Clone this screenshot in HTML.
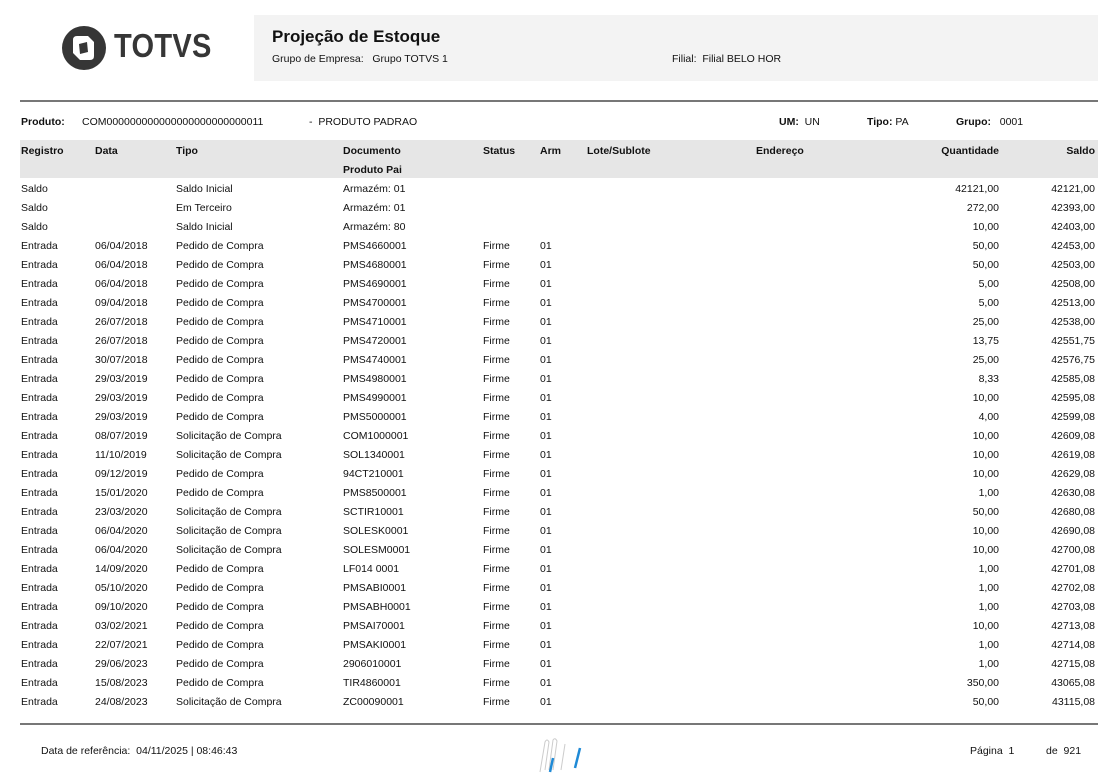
<!DOCTYPE html>
<html><head><meta charset="utf-8"><style>
body{margin:0;width:1108px;height:781px;background:#fff;font-family:"Liberation Sans",sans-serif;color:#111;position:relative;overflow:hidden;font-size:10.5px}
.a{position:absolute;white-space:nowrap}
.b{font-weight:bold}
.r{position:absolute;left:0;width:1108px;height:19px}
.r span{position:absolute;top:1px;white-space:nowrap}
.c1{left:21px}.c2{left:95px}.c3{left:176px}.c4{left:343px}.c5{left:483px}.c6{left:540px}
.q{right:109px}.s{right:13px}
</style></head><body>
<svg class="a" style="left:61px;top:25px" width="46" height="46" viewBox="0 0 46 46">
<circle cx="23" cy="23" r="22" fill="#363636"/>
<path d="M12 15 Q12 11 16 11 L27 11 L33 17 L33 31 Q33 35 29 35 L19 35 L12 28 Z" fill="#fff"/>
<path d="M18 19 L26 17 L27 27 L19 29 Z" fill="#363636"/>
</svg>
<div class="a b" style="left:114px;top:27px;font-size:33px;color:#363636;letter-spacing:0.3px;transform:scaleX(0.88);transform-origin:left">TOTVS</div>
<div class="a" style="left:254px;top:15px;width:844px;height:66px;background:#f3f3f3"></div>
<div class="a b" style="left:272px;top:27px;font-size:17px">Projeção de Estoque</div>
<div class="a" style="left:272px;top:53px">Grupo de Empresa:&nbsp;&nbsp; Grupo TOTVS 1</div>
<div class="a" style="left:672px;top:53px">Filial:&nbsp; Filial BELO HOR</div>
<div class="a" style="left:20px;top:100px;width:1078px;height:2px;background:#777"></div>
<div class="a b" style="left:21px;top:116px">Produto:</div>
<div class="a" style="left:82px;top:116px">COM000000000000000000000000011</div>
<div class="a" style="left:309px;top:116px">-&nbsp; PRODUTO PADRAO</div>
<div class="a" style="left:779px;top:116px"><b>UM:</b>&nbsp; UN</div>
<div class="a" style="left:867px;top:116px"><b>Tipo:</b> PA</div>
<div class="a" style="left:956px;top:116px"><b>Grupo:</b>&nbsp;&nbsp; 0001</div>
<div class="a" style="left:20px;top:140px;width:1078px;height:38px;background:#e6e6e6"></div>
<div class="r b" style="top:144px"><span class="c1">Registro</span><span class="c2">Data</span><span class="c3">Tipo</span><span class="c4">Documento</span><span class="c5">Status</span><span class="c6">Arm</span><span style="left:587px">Lote/Sublote</span><span style="left:756px">Endereço</span><span class="q">Quantidade</span><span class="s">Saldo</span></div>
<div class="r b" style="top:163px"><span class="c4">Produto Pai</span></div>
<div class="r" style="top:182px"><span class="c1">Saldo</span><span class="c3">Saldo Inicial</span><span class="c4">Armazém: 01</span><span class="q">42121,00</span><span class="s">42121,00</span></div>
<div class="r" style="top:201px"><span class="c1">Saldo</span><span class="c3">Em Terceiro</span><span class="c4">Armazém: 01</span><span class="q">272,00</span><span class="s">42393,00</span></div>
<div class="r" style="top:220px"><span class="c1">Saldo</span><span class="c3">Saldo Inicial</span><span class="c4">Armazém: 80</span><span class="q">10,00</span><span class="s">42403,00</span></div>
<div class="r" style="top:239px"><span class="c1">Entrada</span><span class="c2">06/04/2018</span><span class="c3">Pedido de Compra</span><span class="c4">PMS4660001</span><span class="c5">Firme</span><span class="c6">01</span><span class="q">50,00</span><span class="s">42453,00</span></div>
<div class="r" style="top:258px"><span class="c1">Entrada</span><span class="c2">06/04/2018</span><span class="c3">Pedido de Compra</span><span class="c4">PMS4680001</span><span class="c5">Firme</span><span class="c6">01</span><span class="q">50,00</span><span class="s">42503,00</span></div>
<div class="r" style="top:277px"><span class="c1">Entrada</span><span class="c2">06/04/2018</span><span class="c3">Pedido de Compra</span><span class="c4">PMS4690001</span><span class="c5">Firme</span><span class="c6">01</span><span class="q">5,00</span><span class="s">42508,00</span></div>
<div class="r" style="top:296px"><span class="c1">Entrada</span><span class="c2">09/04/2018</span><span class="c3">Pedido de Compra</span><span class="c4">PMS4700001</span><span class="c5">Firme</span><span class="c6">01</span><span class="q">5,00</span><span class="s">42513,00</span></div>
<div class="r" style="top:315px"><span class="c1">Entrada</span><span class="c2">26/07/2018</span><span class="c3">Pedido de Compra</span><span class="c4">PMS4710001</span><span class="c5">Firme</span><span class="c6">01</span><span class="q">25,00</span><span class="s">42538,00</span></div>
<div class="r" style="top:334px"><span class="c1">Entrada</span><span class="c2">26/07/2018</span><span class="c3">Pedido de Compra</span><span class="c4">PMS4720001</span><span class="c5">Firme</span><span class="c6">01</span><span class="q">13,75</span><span class="s">42551,75</span></div>
<div class="r" style="top:353px"><span class="c1">Entrada</span><span class="c2">30/07/2018</span><span class="c3">Pedido de Compra</span><span class="c4">PMS4740001</span><span class="c5">Firme</span><span class="c6">01</span><span class="q">25,00</span><span class="s">42576,75</span></div>
<div class="r" style="top:372px"><span class="c1">Entrada</span><span class="c2">29/03/2019</span><span class="c3">Pedido de Compra</span><span class="c4">PMS4980001</span><span class="c5">Firme</span><span class="c6">01</span><span class="q">8,33</span><span class="s">42585,08</span></div>
<div class="r" style="top:391px"><span class="c1">Entrada</span><span class="c2">29/03/2019</span><span class="c3">Pedido de Compra</span><span class="c4">PMS4990001</span><span class="c5">Firme</span><span class="c6">01</span><span class="q">10,00</span><span class="s">42595,08</span></div>
<div class="r" style="top:410px"><span class="c1">Entrada</span><span class="c2">29/03/2019</span><span class="c3">Pedido de Compra</span><span class="c4">PMS5000001</span><span class="c5">Firme</span><span class="c6">01</span><span class="q">4,00</span><span class="s">42599,08</span></div>
<div class="r" style="top:429px"><span class="c1">Entrada</span><span class="c2">08/07/2019</span><span class="c3">Solicitação de Compra</span><span class="c4">COM1000001</span><span class="c5">Firme</span><span class="c6">01</span><span class="q">10,00</span><span class="s">42609,08</span></div>
<div class="r" style="top:448px"><span class="c1">Entrada</span><span class="c2">11/10/2019</span><span class="c3">Solicitação de Compra</span><span class="c4">SOL1340001</span><span class="c5">Firme</span><span class="c6">01</span><span class="q">10,00</span><span class="s">42619,08</span></div>
<div class="r" style="top:467px"><span class="c1">Entrada</span><span class="c2">09/12/2019</span><span class="c3">Pedido de Compra</span><span class="c4">94CT210001</span><span class="c5">Firme</span><span class="c6">01</span><span class="q">10,00</span><span class="s">42629,08</span></div>
<div class="r" style="top:486px"><span class="c1">Entrada</span><span class="c2">15/01/2020</span><span class="c3">Pedido de Compra</span><span class="c4">PMS8500001</span><span class="c5">Firme</span><span class="c6">01</span><span class="q">1,00</span><span class="s">42630,08</span></div>
<div class="r" style="top:505px"><span class="c1">Entrada</span><span class="c2">23/03/2020</span><span class="c3">Solicitação de Compra</span><span class="c4">SCTIR10001</span><span class="c5">Firme</span><span class="c6">01</span><span class="q">50,00</span><span class="s">42680,08</span></div>
<div class="r" style="top:524px"><span class="c1">Entrada</span><span class="c2">06/04/2020</span><span class="c3">Solicitação de Compra</span><span class="c4">SOLESK0001</span><span class="c5">Firme</span><span class="c6">01</span><span class="q">10,00</span><span class="s">42690,08</span></div>
<div class="r" style="top:543px"><span class="c1">Entrada</span><span class="c2">06/04/2020</span><span class="c3">Solicitação de Compra</span><span class="c4">SOLESM0001</span><span class="c5">Firme</span><span class="c6">01</span><span class="q">10,00</span><span class="s">42700,08</span></div>
<div class="r" style="top:562px"><span class="c1">Entrada</span><span class="c2">14/09/2020</span><span class="c3">Pedido de Compra</span><span class="c4">LF014 0001</span><span class="c5">Firme</span><span class="c6">01</span><span class="q">1,00</span><span class="s">42701,08</span></div>
<div class="r" style="top:581px"><span class="c1">Entrada</span><span class="c2">05/10/2020</span><span class="c3">Pedido de Compra</span><span class="c4">PMSABI0001</span><span class="c5">Firme</span><span class="c6">01</span><span class="q">1,00</span><span class="s">42702,08</span></div>
<div class="r" style="top:600px"><span class="c1">Entrada</span><span class="c2">09/10/2020</span><span class="c3">Pedido de Compra</span><span class="c4">PMSABH0001</span><span class="c5">Firme</span><span class="c6">01</span><span class="q">1,00</span><span class="s">42703,08</span></div>
<div class="r" style="top:619px"><span class="c1">Entrada</span><span class="c2">03/02/2021</span><span class="c3">Pedido de Compra</span><span class="c4">PMSAI70001</span><span class="c5">Firme</span><span class="c6">01</span><span class="q">10,00</span><span class="s">42713,08</span></div>
<div class="r" style="top:638px"><span class="c1">Entrada</span><span class="c2">22/07/2021</span><span class="c3">Pedido de Compra</span><span class="c4">PMSAKI0001</span><span class="c5">Firme</span><span class="c6">01</span><span class="q">1,00</span><span class="s">42714,08</span></div>
<div class="r" style="top:657px"><span class="c1">Entrada</span><span class="c2">29/06/2023</span><span class="c3">Pedido de Compra</span><span class="c4">2906010001</span><span class="c5">Firme</span><span class="c6">01</span><span class="q">1,00</span><span class="s">42715,08</span></div>
<div class="r" style="top:676px"><span class="c1">Entrada</span><span class="c2">15/08/2023</span><span class="c3">Pedido de Compra</span><span class="c4">TIR4860001</span><span class="c5">Firme</span><span class="c6">01</span><span class="q">350,00</span><span class="s">43065,08</span></div>
<div class="r" style="top:695px"><span class="c1">Entrada</span><span class="c2">24/08/2023</span><span class="c3">Solicitação de Compra</span><span class="c4">ZC00090001</span><span class="c5">Firme</span><span class="c6">01</span><span class="q">50,00</span><span class="s">43115,08</span></div>
<div class="a" style="left:20px;top:723px;width:1078px;height:2px;background:#777"></div>
<div class="a" style="left:41px;top:745px">Data de referência:&nbsp; 04/11/2025 | 08:46:43</div>
<svg class="a" style="left:535px;top:736px" width="50" height="40" viewBox="0 0 50 40">
<g fill="none" stroke="#ccc" stroke-width="1"><path d="M5 36 L10 6 Q12 2 14 6 L10 34"/><path d="M14 34 L18 4 Q20 1 22 5 L18 34"/><path d="M26 34 L30 8"/></g>
<path d="M15 36 L18 22" stroke="#1f8ad6" stroke-width="2.5"/><path d="M40 32 L45 12" stroke="#1f8ad6" stroke-width="2.5"/></svg>
<div class="a" style="left:970px;top:745px">Página&nbsp; 1</div>
<div class="a" style="left:1046px;top:745px">de&nbsp; 921</div>
</body></html>
